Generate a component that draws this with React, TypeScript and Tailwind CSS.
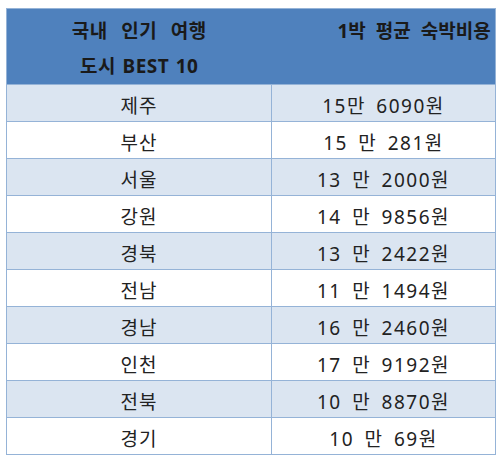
const rows: [string, string][] = [
	["제주", "15만 6090원"],
	["부산", "15 만 281원"],
	["서울", "13 만 2000원"],
	["강원", "14 만 9856원"],
	["경북", "13 만 2422원"],
	["전남", "11 만 1494원"],
	["경남", "16 만 2460원"],
	["인천", "17 만 9192원"],
	["전북", "10 만 8870원"],
	["경기", "10 만 69원"],
];

export default function App() {
	return (
		<div
			className="min-h-[460px] w-[501px] bg-white pl-[6px] pt-[8px]"
			style={{ fontFamily: '"Noto Sans", "Noto Sans CJK KR", sans-serif' }}
		>
			<table className="w-[490px] table-fixed border-collapse border border-[#95b3d7] text-[#222]">
				<colgroup>
					<col className="w-[265px]" />
					<col />
				</colgroup>
				<thead>
					<tr className="bg-[#4f81bd] align-top text-[#1a1a1a]">
						<th className="h-[74px] p-0 pt-[5px] text-center text-[19px] font-bold leading-[35px] tracking-[0.5px]">
							<span className="[word-spacing:8px]">국내 인기 여행</span>
							<br />
							<span className="[word-spacing:1px]">도시 BEST 10</span>
						</th>
						<th className="h-[74px] p-0 pl-[66px] pt-[5px] text-left text-[19px] font-bold leading-[35px] [word-spacing:5px]">
							1박 평균 숙박비용
						</th>
					</tr>
				</thead>
				<tbody>
					{rows.map(([city, cost], i) => (
						<tr
							key={city}
							className={`border-t border-[#95b3d7] ${i % 2 === 0 ? "bg-[#dbe5f1]" : "bg-white"}`}
						>
							<td className="h-[36px] border-r border-[#95b3d7] p-0 pt-[6px] text-center text-[19px] leading-[30px] tracking-[1px]">
								{city}
							</td>
							<td className="h-[36px] p-0 pt-[6px] text-center text-[19px] leading-[30px] tracking-[1.5px] [word-spacing:4px]">
								{cost}
							</td>
						</tr>
					))}
				</tbody>
			</table>
		</div>
	);
}
